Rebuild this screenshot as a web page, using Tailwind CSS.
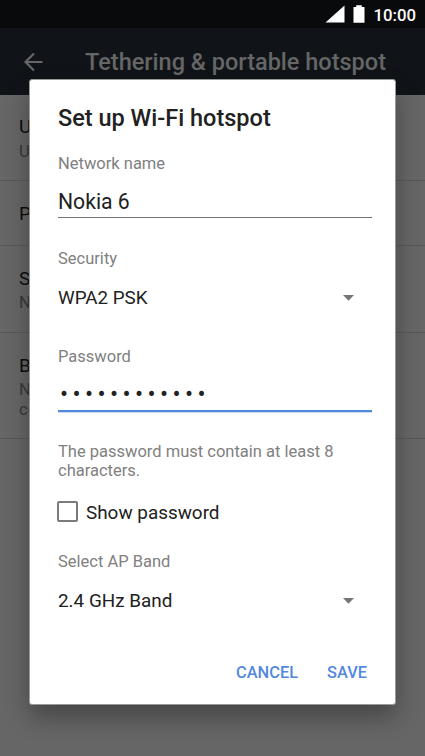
<!DOCTYPE html>
<html lang="en">
<head>
<meta charset="utf-8">
<title>Set up Wi-Fi hotspot</title>
<script src="https://cdn.jsdelivr.net/npm/@tailwindcss/browser@4"></script>
</head>
<body class="overflow-hidden bg-[#666] font-['Roboto',sans-serif]">
<div class="relative h-[756px] w-[425px] overflow-hidden whitespace-nowrap">
  <!-- Status bar -->
  <div class="flex h-7 items-center justify-end bg-[#090a0c] pr-[9px] text-white">
    <svg class="mr-2 h-[18px] w-5" viewBox="0 0 20 18" fill="currentColor"><path d="M0.5 17.5 19.5 0.5V17.5Z"/></svg>
    <svg class="mr-2 h-[18px] w-3" viewBox="0 0 12 18" fill="currentColor"><path d="M3.2 0.3H8.8V2H11.5V17.7H0.5V2H3.2Z"/></svg>
    <span class="pt-0.5 text-[16.8px] leading-7 font-medium">10:00</span>
  </div>
  <!-- App bar -->
  <header class="flex h-[67px] items-center bg-[#101418] pl-6 text-[#666]">
    <svg class="mr-[42px] h-5 w-[19px]" viewBox="0 0 19 20" fill="none" stroke="currentColor" stroke-width="2.2"><path d="M18.5 10H1.8M10 1.5 1.5 10 10 18.5"/></svg>
    <h1 class="pt-[3px] text-[23.5px] font-medium">Tethering &amp; portable hotspot</h1>
  </header>
  <!-- Settings list behind the dialog -->
  <main class="text-[#0d0d0d]">
    <section class="h-[86px] border-b border-[#585858] pl-[19px] pt-5"><div class="text-[19px] leading-6">U</div><div class="pt-[3px] text-[16.5px] leading-5 text-[#383838]">U</div></section>
    <section class="h-[65px] border-b border-[#585858] pl-[19px] pt-[21px]"><div class="text-[19px] leading-6">P</div></section>
    <section class="h-[87px] border-b border-[#585858] pl-[19px] pt-[21px]"><div class="text-[19px] leading-6">S</div><div class="pt-0.5 text-[16.5px] leading-5 text-[#383838]">N</div></section>
    <section class="h-[106px] border-b border-[#585858] pl-[19px] pt-[21px]"><div class="text-[19px] leading-6">B</div><div class="pt-0.5 text-[16.5px] leading-5 text-[#383838]">N<br>co</div></section>
  </main>
  <!-- Dialog -->
  <div class="absolute left-[29px] top-[79px] flex h-[626px] w-[367px] flex-col rounded-[3px] border border-[#999] bg-white pl-7 pr-[23px] pt-[23px] text-[#212121] shadow-[0_12px_24px_rgba(0,0,0,0.32)]">
    <h2 class="text-[23.5px] leading-[30px] font-medium">Set up Wi-Fi hotspot</h2>
    <div class="mt-[21px] text-[16.5px] leading-5 text-[#808080]">Network name</div>
    <div class="mt-3.5 h-[30px] border-b border-[#737373] text-[21.2px] leading-[27px]">Nokia 6</div>
    <div class="mt-[31px] text-[16.5px] leading-5 text-[#808080]">Security</div>
    <div class="mt-[17px] flex items-center justify-between pr-[18px] text-[18.8px] leading-6"><span>WPA2 PSK</span><svg class="h-1.5 w-[11px]" viewBox="0 0 11 6" fill="#757575"><path d="M0 0H11L5.5 5.7Z"/></svg></div>
    <div class="mt-[37px] text-[16.5px] leading-5 text-[#808080]">Password</div>
    <div class="h-[45px] border-b-2 border-[#5388de] pl-0.5 pt-[14px] text-[24px] leading-[26px] tracking-[4.4px] shadow-[0_1px_0_#c9dcf8]">••••••••••••</div>
    <p class="mt-[30px] text-[16.5px] leading-[19px] text-[#808080]">The password must contain at least 8<br>characters.</p>
    <div class="mt-[21px] flex h-[21px] items-center text-[18.9px] leading-[21px]"><span class="-ml-px mr-2 size-[21px] rounded-[2px] border-2 border-[#7b7b7b]"></span><span class="pt-0.5">Show password</span></div>
    <div class="mt-[30px] text-[16.5px] leading-5 text-[#808080]">Select AP Band</div>
    <div class="mt-[17px] flex items-center justify-between pr-[18px] text-[18.9px] leading-6"><span>2.4 GHz Band</span><svg class="h-1.5 w-[11px]" viewBox="0 0 11 6" fill="#757575"><path d="M0 0H11L5.5 5.7Z"/></svg></div>
    <div class="mt-[50px] flex justify-end gap-[29px] pr-[5px] text-[16.4px] leading-5 font-medium text-[#5388de]"><span>CANCEL</span><span>SAVE</span></div>
  </div>
</div>
</body>
</html>
